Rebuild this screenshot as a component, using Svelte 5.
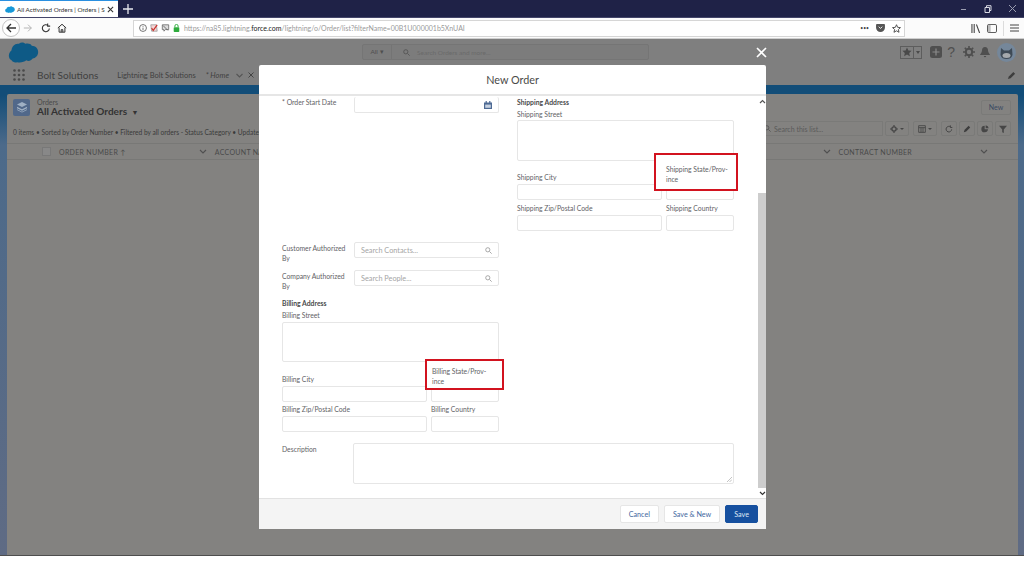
<div class="browser">
    <div class="tabstrip">
        <div class="tab">
            <svg width="10" height="7" viewBox="0 0 22 16"><path d="M6 15c-3 0-6-2-6-5 0-2 1-4 3-4 1-3 4-5 7-4 2-2 5-2 7 0 3 0 5 3 5 6s-3 6-6 6c-2 2-5 2-7 1-1 1-2 1-3 0z" fill="#1798d8" /></svg>
            <span class="tab-title">All Activated Orders | Orders | S</span>
            <svg class="tab-x" width="7" height="7" viewBox="0 0 8 8"><path d="M1 1l6 6M7 1L1 7" stroke="#333" stroke-width="1.2" /></svg>
        </div>
        <svg class="tab-plus" width="10" height="10" viewBox="0 0 10 10"><path d="M5 0v10M0 5h10" stroke="#e8e9ee" stroke-width="1.3" /></svg>
        <div class="win-btns">
            <svg width="8" height="8" viewBox="0 0 8 8"><path d="M1 4.500h5" stroke="#9a9db0" /></svg>
            <svg width="8" height="8" viewBox="0 0 8 8"><path d="M1 2.500h4.500v5H1zM2.500 2.500V.7H7v4.800H5.500" fill="none" stroke="#d8d9e2" /></svg>
            <svg width="9" height="9" viewBox="0 0 9 9"><path d="M1 1l7 7M8 1L1 8" stroke="#9a9db0" /></svg>
        </div>
    </div>
    <div class="toolbar">
        <div class="back">
            <svg width="12" height="12" viewBox="0 0 12 12"><path d="M11 6H2M6 2L2 6l4 4" fill="none" stroke="#333" stroke-width="1.3" /></svg>
        </div>
        <svg class="tb-forward" width="10" height="10" viewBox="0 0 12 12"><path d="M1 6h9M6 2l4 4-4 4" fill="none" stroke="#b5b5b5" stroke-width="1.2" /></svg>
        <svg class="tb-reload" width="10" height="10" viewBox="0 0 12 12"><path d="M10 6.500A4.200 4.200 0 1 1 8.500 3M8 .5v3.200h3" fill="none" stroke="#333" stroke-width="1.3" /></svg>
        <svg class="tb-home" width="10" height="10" viewBox="0 0 12 12"><path d="M1 6l5-4.500L11 6M2.500 5.500V11h7V5.500M5 11V8h2v3" fill="none" stroke="#333" stroke-width="1.2" /></svg>
        <div class="urlbar">
            <svg width="8" height="8" viewBox="0 0 10 10"><circle cx="5" cy="5" r="4.300" fill="none" stroke="#555" /><path d="M5 4.500V7.500M5 2.500v1" stroke="#555" /></svg>
            <svg width="8" height="8" viewBox="0 0 10 10"><path d="M1 1h7l1 8H2z" fill="#f5d5d5" stroke="#999" /><path d="M2 5l2 3 5-7" fill="none" stroke="#c9302c" stroke-width="1.4" /></svg>
            <svg width="9" height="8" viewBox="0 0 10 10"><path d="M1 1h8v6H5L3 9V7H1z" fill="#ddd" stroke="#666" /><path d="M2 2l6 6" stroke="#555" /></svg>
            <svg width="7" height="8" viewBox="0 0 8 10"><rect x=".5" y="4" width="7" height="6" rx="1" fill="#2eab3c" /><path d="M2 4V2.500a2 2 0 0 1 4 0V4" fill="none" stroke="#2eab3c" stroke-width="1.2" /></svg>
            <span class="url">https://na85.lightning.<b>force.com</b>/lightning/o/Order/list?filterName=00B1U000001b5XnUAI</span>
            <span class="url-end">
                <span class="dots">•••</span>
                <svg width="9" height="8" viewBox="0 0 10 9"><path d="M1 0h8a1 1 0 0 1 1 1v3a5 5 0 0 1-10 0V1a1 1 0 0 1 1-1z" fill="#555" /><path d="M3 3l2 2 2-2" fill="none" stroke="#fff" /></svg>
                <svg width="9" height="9" viewBox="0 0 10 10"><path d="M5 .8l1.300 2.900 3.100.3-2.300 2.100.7 3.100L5 7.600 2.200 9.200l.7-3.100L.6 4l3.100-.3z" fill="none" stroke="#444" /></svg>
            </span>
        </div>
        <div class="tb-right">
            <svg width="10" height="9" viewBox="0 0 11 10"><path d="M1 0v10M3.500 0v10M6 .5l3.500 9.500" fill="none" stroke="#444" stroke-width="1.200" /></svg>
            <svg width="10" height="9" viewBox="0 0 11 10"><rect x=".5" y=".5" width="10" height="9" rx="1.500" fill="none" stroke="#444" /><path d="M1 1h3v8H1z" fill="#bbb" /></svg>
            <span class="tb-sep"></span>
            <svg width="9" height="8" viewBox="0 0 9 8"><path d="M0 1h9M0 4h9M0 7h9" stroke="#444" /></svg>
        </div>
    </div>
</div>

<div class="page">
    <header class="global">
        <svg class="cloud" width="31" height="22" viewBox="0 0 32 24"><path d="M9 22c-2 1-5 0-6-2-2-1-3-3-3-5 0-3 2-5 3-6 0-4 4-8 8-7 2-2 5-2 7 0 3-1 6 0 7 2 4 0 7 3 7 7s-3 7-6 7c-2 3-5 3-7 2-2 2-7 3-10 2z" fill="#0e5a86" /></svg>
        <div class="search">
            <span class="search-all">All ▾</span>
            <span class="search-text">
                <svg width="7" height="7" viewBox="0 0 10 10"><circle cx="4" cy="4" r="3" fill="none" stroke="#555" stroke-width="1.300" /><path d="M6.500 6.500L9.500 9.500" stroke="#555" stroke-width="1.300" /></svg>
                Search Orders and more...
            </span>
        </div>
        <div class="global-actions">
            <span class="fav">
                <svg width="10" height="10" viewBox="0 0 10 10"><path d="M5 .5l1.400 3 3.200.3-2.400 2.200.7 3.300L5 7.600 2.100 9.300l.7-3.300L.4 3.800l3.200-.3z" fill="#4a4a4a" /></svg>
                <i></i>
                <span class="fav-caret"></span>
            </span>
            <svg class="plus" width="12" height="12" viewBox="0 0 12 12"><rect width="12" height="12" rx="2.500" fill="#4f4f4f" /><path d="M6 2.500v7M2.500 6h7" stroke="#8a8a8a" stroke-width="1.200" /></svg>
            <span class="help">?</span>
            <svg class="gear" width="12" height="12" viewBox="0 0 12 12"><circle cx="6" cy="6" r="3.200" fill="none" stroke="#4f4f4f" stroke-width="2" /><path d="M6 0v2.500M6 9.500V12M0 6h2.500M9.500 6H12M1.800 1.800l1.800 1.800M8.400 8.400l1.800 1.800M10.200 1.800L8.400 3.600M3.600 8.400l-1.800 1.800" stroke="#4f4f4f" stroke-width="1.600" /></svg>
            <svg width="10" height="11" viewBox="0 0 10 11"><path d="M5 0c2 0 3 1.500 3 3.500 0 2.500 2 3.500 2 4.500H0c0-1 2-2 2-4.500C2 1.500 3 0 5 0zM3.800 9h2.400a1.200 1.200 0 0 1-2.400 0z" fill="#4f4f4f" /></svg>
            <svg class="avatar" width="19" height="19" viewBox="0 0 19 19"><circle cx="9.500" cy="9.500" r="9.500" fill="#75879a" /><path d="M4 5l3 2.500h5L15 5l.5 7c-1 3-3 4-6 4s-5-1-6-4z" fill="#3e4a56" /><ellipse cx="9.500" cy="12.500" rx="4" ry="2.500" fill="#a5a9ad" /></svg>
        </div>
    </header>
    <nav class="appnav">
        <svg class="waffle" width="12" height="12" viewBox="0 0 12 12" fill="#4a4a4a">
            {#each [1.5, 6, 10.5] as cy}
                {#each [1.5, 6, 10.5] as cx}
                    <circle {cx} {cy} r="1.300" />
                {/each}
            {/each}
        </svg>
        <span class="app-name">Bolt Solutions</span>
        <span class="nav-item">Lightning Bolt Solutions</span>
        <span class="nav-home">* Home</span>
        <svg class="nav-chev" width="7" height="5" viewBox="0 0 7 5"><path d="M.5 1l3 3 3-3" fill="none" stroke="#555" stroke-width="1.100" /></svg>
        <svg class="nav-x" width="6" height="6" viewBox="0 0 6 6"><path d="M.5.5l5 5M5.500.5l-5 5" stroke="#444" stroke-width="1" /></svg>
        <svg class="nav-edit" width="9" height="9" viewBox="0 0 10 10"><path d="M1 9l1-3 5-5 2 2-5 5z" fill="#3d3d3d" /></svg>
    </nav>
    <div class="band">
        <section class="card">
            <div class="card-head">
                <span class="obj-icon">
                    <svg width="12" height="12" viewBox="0 0 12 12" fill="#9fb0c4"><path d="M6 1l5 2.500L6 6 1 3.500z" /><path d="M1 5.800L6 8.300l5-2.500v1.400L6 9.700 1 7.200z" /><path d="M1 8.300l5 2.500 5-2.500v.8L6 11.600 1 9.100z" /></svg>
                </span>
                <div class="titles">
                    <span class="eyebrow">Orders</span>
                    <span class="list-name">All Activated Orders <small>▼</small></span>
                </div>
                <span class="new-btn">New</span>
            </div>
            <div class="card-meta">
                <span class="meta-text">0 items • Sorted by Order Number • Filtered by all orders - Status Category • Updated</span>
                <div class="list-tools">
                    <span class="list-search">
                        <svg width="7" height="7" viewBox="0 0 10 10"><circle cx="4" cy="4" r="3" fill="none" stroke="#555" stroke-width="1.300" /><path d="M6.500 6.500L9.500 9.500" stroke="#555" stroke-width="1.300" /></svg>
                        Search this list...
                    </span>
                    <span class="tool wide"><svg width="8" height="8" viewBox="0 0 12 12"><circle cx="6" cy="6" r="3.200" fill="none" stroke="#464646" stroke-width="2" /><path d="M6 0v2.500M6 9.500V12M0 6h2.500M9.500 6H12" stroke="#464646" stroke-width="1.800" /></svg><em></em></span>
                    <span class="tool wide"><svg width="8" height="8" viewBox="0 0 12 12"><path d="M1 1h10v10H1zM1 4h10M4.500 4v7M7.500 4v7" fill="none" stroke="#464646" stroke-width="1.300" /></svg><em></em></span>
                    <span class="tool"><svg width="8" height="8" viewBox="0 0 12 12"><path d="M10 6.500A4.200 4.200 0 1 1 8.500 3M8 .5v3.200h3" fill="none" stroke="#464646" stroke-width="1.500" /></svg></span>
                    <span class="tool"><svg width="8" height="8" viewBox="0 0 10 10"><path d="M1 9l1-3 5-5 2 2-5 5z" fill="#3d3d3d" /></svg></span>
                    <span class="tool"><svg width="8" height="8" viewBox="0 0 12 12"><path d="M5.500 1a5 5 0 1 0 5 5.500h-5z" fill="#464646" /><path d="M7 0.500a5 5 0 0 1 4.500 4.500H7z" fill="#464646" /></svg></span>
                    <span class="tool"><svg width="8" height="8" viewBox="0 0 10 10"><path d="M0 1h10L6 5.500V10L4 9V5.500z" fill="#464646" /></svg></span>
                </div>
            </div>
            <div class="thead">
                <span class="check"></span>
                <span class="th th-num">ORDER NUMBER ↑</span>
                <svg class="chev" width="8" height="5" viewBox="0 0 8 5"><path d="M1 1l3 3 3-3" fill="none" stroke="#4f4f4f" stroke-width="1.100" /></svg>
                <span class="th th-acct">ACCOUNT NAME</span>
                <svg class="chev chev-contract" width="8" height="5" viewBox="0 0 8 5"><path d="M1 1l3 3 3-3" fill="none" stroke="#4f4f4f" stroke-width="1.100" /></svg>
                <span class="th th-contract">CONTRACT NUMBER</span>
                <svg class="chev chev-last" width="8" height="5" viewBox="0 0 8 5"><path d="M1 1l3 3 3-3" fill="none" stroke="#4f4f4f" stroke-width="1.100" /></svg>
            </div>
        </section>
    </div>
</div>

<svg class="modal-x" width="11" height="11" viewBox="0 0 11 11"><path d="M1 1l9 9M10 1l-9 9" stroke="#fff" stroke-width="1.600" /></svg>

<div class="modal">
    <div class="modal-head">New Order</div>
    <div class="modal-body">
        <div class="form">
            <div class="columns">
                <div class="col col-left">
                    <div class="row row-date">
                        <span class="side-label req"><i>*</i> Order Start Date</span>
                        <span class="input side-input cal">
                            <svg width="8" height="8" viewBox="0 0 10 10"><path d="M0 2h10v8H0zM2 0h1.500v2H2zM6.500 0H8v2H6.500z" fill="#4e6a94" /><path d="M1.500 4.500h7v4h-7z" fill="#c6d1e0" /></svg>
                        </span>
                    </div>
                    <div class="row row-contact">
                        <span class="side-label">Customer Authorized By</span>
                        <span class="input side-input lookup">Search Contacts...
                            <svg width="7" height="7" viewBox="0 0 10 10"><circle cx="4" cy="4" r="3" fill="none" stroke="#999" stroke-width="1.200" /><path d="M6.500 6.500L9.500 9.500" stroke="#999" stroke-width="1.200" /></svg>
                        </span>
                    </div>
                    <div class="row row-people">
                        <span class="side-label">Company Authorized By</span>
                        <span class="input side-input lookup">Search People...
                            <svg width="7" height="7" viewBox="0 0 10 10"><circle cx="4" cy="4" r="3" fill="none" stroke="#999" stroke-width="1.200" /><path d="M6.500 6.500L9.500 9.500" stroke="#999" stroke-width="1.200" /></svg>
                        </span>
                    </div>
                    <div class="address billing">
                        <div class="addr-title">Billing Address</div>
                        <div class="lbl street-lbl">Billing Street</div>
                        <span class="input area"></span>
                        <div class="pair city-row">
                            <div class="wide-cell"><div class="lbl">Billing City</div><span class="input"></span></div>
                            <div class="narrow-cell"><span class="input"></span></div>
                        </div>
                        <div class="pair zip-row">
                            <div class="wide-cell"><div class="lbl">Billing Zip/Postal Code</div><span class="input"></span></div>
                            <div class="narrow-cell"><div class="lbl">Billing Country</div><span class="input"></span></div>
                        </div>
                    </div>
                </div>
                <div class="col col-right">
                    <div class="address shipping">
                        <div class="addr-title">Shipping Address</div>
                        <div class="lbl street-lbl">Shipping Street</div>
                        <span class="input area"><svg class="grip" width="5" height="5" viewBox="0 0 5 5"><path d="M0 5l5-5M2.500 5L5 2.500" stroke="#aaa" stroke-width=".7" /></svg></span>
                        <div class="pair city-row">
                            <div class="wide-cell"><div class="lbl">Shipping City</div><span class="input"></span></div>
                            <div class="narrow-cell"><span class="input"></span></div>
                        </div>
                        <div class="pair zip-row">
                            <div class="wide-cell"><div class="lbl">Shipping Zip/Postal Code</div><span class="input"></span></div>
                            <div class="narrow-cell"><div class="lbl">Shipping Country</div><span class="input"></span></div>
                        </div>
                    </div>
                </div>
            </div>
            <div class="desc-row">
                <span class="desc-label">Description</span>
                <span class="input desc"><svg class="grip" width="5" height="5" viewBox="0 0 5 5"><path d="M0 5l5-5M2.500 5L5 2.500" stroke="#aaa" stroke-width=".7" /></svg></span>
            </div>
        </div>
        <div class="scrollbar">
            <svg class="arrow" width="7" height="5" viewBox="0 0 7 5"><path d="M1 4l2.500-2.500L6 4" fill="none" stroke="#555" stroke-width="1.200" /></svg>
            <div class="track"><div class="thumb"></div></div>
            <svg class="arrow" width="7" height="5" viewBox="0 0 7 5"><path d="M1 1l2.500 2.500L6 1" fill="none" stroke="#333" stroke-width="1.200" /></svg>
        </div>
        <div class="callout callout-ship">Shipping State/Prov-<br />ince</div>
        <div class="callout callout-bill">Billing State/Prov-<br />ince</div>
    </div>
    <div class="modal-foot">
        <button class="btn">Cancel</button>
        <button class="btn">Save &amp; New</button>
        <button class="btn primary">Save</button>
    </div>
</div>

<style>
    :global(body) {
        background: #fff;
        overflow: hidden;
    }
    :global(#app) {
        font-family: Lato, "Open Sans", sans-serif;
        width: 1024px;
        height: 576px;
        position: relative;
        overflow: hidden;
    }
    .tabstrip {
        height: 18px;
        box-sizing: border-box;
        background: #1f2247;
        display: flex;
        align-items: stretch;
        border-bottom: 1px solid #44466a;
    }
    .tab {
        width: 118px;
        box-sizing: border-box;
        background: #fff;
        border-top: 1px solid #2a8fe0;
        display: flex;
        align-items: center;
        gap: 2px;
        padding: 0 4px 0 5px;
    }
    .tab-title {
        font-size: 6.300px;
        color: #333;
        white-space: nowrap;
        flex: 1;
    }
    .tab-plus {
        margin: 4px 0 0 5px;
    }
    .win-btns {
        margin-left: auto;
        display: flex;
        align-items: center;
        gap: 16px;
        padding-right: 7px;
    }
    .toolbar {
        height: 21px;
        box-sizing: border-box;
        background: #fbfbfb;
        display: flex;
        align-items: center;
        border-bottom: 1px solid #cfcfcf;
    }
    .back {
        width: 18px;
        height: 18px;
        margin-left: 2px;
        box-sizing: border-box;
        border: 1px solid #c4c4c4;
        border-radius: 50%;
        background: #fff;
        display: flex;
        align-items: center;
        justify-content: center;
    }
    .tb-forward { margin-left: 3px; }
    .tb-reload { margin-left: 8px; }
    .tb-home { margin-left: 6px; }
    .urlbar {
        width: 772px;
        margin-left: 66px;
        height: 17px;
        box-sizing: border-box;
        border: 1px solid #d6d6d6;
        background: #fff;
        display: flex;
        align-items: center;
        gap: 3px;
        padding: 0 3px 0 5px;
        font-size: 7px;
    }
    .url {
        margin-left: 1px;
        color: #9a9a9a;
        white-space: nowrap;
    }
    .url b {
        font-weight: 400;
        color: #222;
    }
    .url-end {
        margin-left: auto;
        display: flex;
        align-items: center;
        gap: 7px;
    }
    .dots {
        font-size: 5px;
        color: #444;
    }
    .tb-right {
        display: flex;
        align-items: center;
        gap: 6px;
        margin-left: auto;
        padding-right: 5px;
    }
    .tb-sep {
        width: 1px;
        height: 15px;
        background: #dcdcdc;
    }

    .page {
        height: 517px;
        box-sizing: border-box;
        background: #7f7f7f;
        border-bottom: 1px solid #4e4e4e;
        display: flex;
        flex-direction: column;
    }
    .global {
        height: 26px;
        flex: none;
        position: relative;
        display: flex;
        align-items: center;
    }
    .cloud { margin: 2px 0 0 8px; }
    .search {
        position: absolute;
        left: 362px;
        top: 5px;
        width: 287px;
        height: 16px;
        background: #7c7c7c;
        border: 1px solid #757575;
        box-sizing: border-box;
        border-radius: 2px;
        display: flex;
        align-items: center;
        font-size: 6.500px;
        color: #4f4f4f;
    }
    .search-all {
        width: 28px;
        text-align: center;
        border-right: 1px solid #747474;
        line-height: 14px;
    }
    .search-text {
        display: flex;
        align-items: center;
        gap: 7px;
        margin-left: 11px;
        color: #6a6a6a;
    }
    .global-actions {
        margin-left: auto;
        display: flex;
        align-items: center;
        gap: 5px;
        padding-right: 8px;
    }
    .fav {
        width: 22px;
        height: 13px;
        border: 1px solid #5d5d5d;
        box-sizing: border-box;
        display: flex;
        align-items: center;
        padding-left: 1px;
        position: relative;
    }
    .fav i {
        width: 1px;
        height: 11px;
        background: #5d5d5d;
        margin-left: 1px;
    }
    .fav-caret {
        margin-left: 2px;
        border: 2.500px solid transparent;
        border-top: 3px solid #4a4a4a;
        border-bottom: 0;
    }
    .plus { margin-left: 3px; }
    .gear { margin-left: 3px; }
    .help {
        font-size: 14px;
        color: #505050;
        font-family: "Liberation Sans", sans-serif;
    }
    .avatar { margin-left: 2px; }
    .appnav {
        height: 20px;
        flex: none;
        display: flex;
        align-items: center;
        color: #3f3f3f;
    }
    .waffle { margin-left: 13px; }
    .app-name {
        font-size: 10px;
        margin-left: 12px;
    }
    .nav-item {
        font-size: 7.500px;
        margin-left: 19px;
    }
    .nav-home {
        font-size: 7.500px;
        font-style: italic;
        margin-left: 10px;
    }
    .nav-chev { margin-left: 7px; }
    .nav-x { margin-left: 5px; }
    .nav-edit {
        margin-left: auto;
        margin-right: 8px;
    }
    .band {
        flex: 1;
        background: linear-gradient(#124d78 0, #124d78 10px, #4c6a8a 60px, #5f6b84 100%);
        padding: 9px 6px 0 7px;
        min-height: 0;
    }
    .card {
        height: 100%;
        background: #838280;
        border-radius: 2px 2px 0 0;
        box-sizing: border-box;
    }
    .card-head {
        height: 26px;
        display: flex;
        align-items: center;
        padding: 0 7px 0 6px;
    }
    .obj-icon {
        width: 17px;
        height: 17px;
        background: #51688a;
        border-radius: 2px;
        display: flex;
        align-items: center;
        justify-content: center;
    }
    .titles {
        display: flex;
        flex-direction: column;
        margin-left: 7px;
        line-height: 1;
    }
    .eyebrow {
        font-size: 7px;
        color: #4a4a4a;
    }
    .list-name {
        font-size: 10px;
        font-weight: 700;
        color: #333;
    }
    .list-name small {
        font-size: 7px;
        margin-left: 2px;
    }
    .new-btn {
        margin-left: auto;
        width: 30px;
        height: 15px;
        border: 1px solid #7a7a78;
        box-sizing: border-box;
        border-radius: 2px;
        font-size: 7px;
        color: #3a4a63;
        text-align: center;
        line-height: 13px;
    }
    .card-meta {
        height: 24px;
        display: flex;
        align-items: flex-start;
        padding: 0 7px 0 6px;
        font-size: 6.600px;
        color: #3a3a3a;
        border-bottom: 1px solid #787876;
        box-sizing: border-box;
    }
    .meta-text {
        margin-top: 8px;
        white-space: nowrap;
    }
    .list-tools {
        margin-left: auto;
        display: flex;
        align-items: center;
        gap: 2px;
        margin-top: 1px;
    }
    .list-search {
        width: 125px;
        height: 15px;
        display: flex;
        align-items: center;
        gap: 3px;
        font-size: 7px;
        color: #5a5a5a;
        padding-left: 5px;
        border: 1px solid #7a7a78;
        box-sizing: border-box;
    }
    .tool {
        height: 15px;
        width: 16px;
        border: 1px solid #7a7a78;
        box-sizing: border-box;
        border-radius: 2px;
        display: flex;
        align-items: center;
        justify-content: center;
        gap: 2px;
    }
    .tool.wide {
        width: 24px;
        margin-right: 2px;
    }
    .tool em {
        border: 2px solid transparent;
        border-top: 2.500px solid #464646;
        border-bottom: 0;
    }
    .thead {
        height: 16px;
        display: flex;
        align-items: center;
        font-size: 7px;
        letter-spacing: .3px;
        color: #4a4a4a;
        border-bottom: 1px solid #787876;
        box-sizing: border-box;
    }
    .check {
        width: 9px;
        height: 9px;
        background: #888;
        border: 1px solid #787878;
        box-sizing: border-box;
        margin-left: 35px;
    }
    .th { white-space: nowrap; }
    .th-num { margin-left: 8px; }
    .chev { margin-left: 73px; }
    .th-acct { margin-left: 8px; }
    .chev-contract { margin-left: 548px; }
    .th-contract { margin-left: 8px; }
    .chev-last { margin-left: 68px; }

    .modal-x {
        position: absolute;
        left: 756px;
        top: 47px;
    }
    .modal {
        position: absolute;
        left: 259px;
        top: 65px;
        width: 507px;
        height: 464px;
        background: #fff;
        border-radius: 2px;
        display: flex;
        flex-direction: column;
    }
    .modal-head {
        height: 31px;
        flex: none;
        box-sizing: border-box;
        border-bottom: 2px solid #e6e6e6;
        text-align: center;
        font-size: 10.800px;
        line-height: 30px;
        color: #4a4a48;
    }
    .modal-body {
        flex: 1;
        position: relative;
        overflow: hidden;
        display: flex;
    }
    .form {
        flex: 1;
        padding: 1px 24px 0 23px;
        color: #5f6266;
        font-size: 6.800px;
    }
    .columns {
        display: flex;
        gap: 18px;
    }
    .col {
        width: 217px;
        flex: none;
    }
    .row {
        display: flex;
    }
    .side-label {
        width: 72px;
        flex: none;
        line-height: 10px;
        padding-right: 4px;
        box-sizing: border-box;
        margin-top: 1px;
    }
    .req {
        margin-top: 0;
    }
    .req i {
        color: #6a5a5a;
        font-style: normal;
    }
    .input {
        display: block;
        height: 16px;
        box-sizing: border-box;
        border: 1px solid #e6e6e6;
        border-radius: 2px;
        background: #fff;
        position: relative;
    }
    .side-input {
        flex: 1;
        display: flex;
        align-items: center;
        justify-content: space-between;
        padding: 0 6px;
        color: #a5a5a5;
    }
    .lookup {
        font-size: 7.300px;
    }
    .cal {
        border-top: 0;
        justify-content: flex-end;
    }
    .row-contact {
        margin-top: 129px;
    }
    .row-people {
        margin-top: 7px;
    }
    .address {
        line-height: 9px;
    }
    .billing {
        margin-top: 8px;
    }
    .shipping {
        margin-top: 1px;
    }
    .addr-title {
        font-weight: 700;
        color: #4a4a4a;
    }
    .street-lbl {
        margin-top: 3px;
    }
    .lbl {
        margin-bottom: 2px;
    }
    .area {
        height: 41px;
    }
    .street-lbl {
        margin-bottom: 1px;
    }
    .billing .area {
        height: 40px;
        margin-top: 2px;
    }
    .pair {
        display: flex;
        gap: 4px;
        align-items: flex-end;
    }
    .city-row {
        margin-top: 12px;
    }
    .zip-row {
        margin-top: 4px;
    }
    .billing .city-row {
        margin-top: 13px;
    }
    .billing .zip-row {
        margin-top: 3px;
    }
    .wide-cell {
        width: 145px;
        flex: none;
    }
    .narrow-cell {
        flex: 1;
    }
    .desc-row {
        display: flex;
        margin-top: 11px;
    }
    .desc-label {
        width: 71px;
        flex: none;
        padding-top: 2px;
    }
    .desc {
        flex: 1;
        height: 41px;
    }
    .grip {
        position: absolute;
        right: 1px;
        bottom: 1px;
    }
    .scrollbar {
        width: 9px;
        flex: none;
        display: flex;
        flex-direction: column;
        align-items: center;
        background: #fff;
        padding: 3px 0 2px;
        box-sizing: border-box;
    }
    .track {
        flex: 1;
        width: 100%;
        display: flex;
        flex-direction: column;
        justify-content: flex-end;
        padding: 3px 0;
        box-sizing: border-box;
    }
    .thumb {
        height: 295px;
        background: #cdcdcd;
    }
    .callout {
        position: absolute;
        background: #fff;
        border: 2px solid #d2131f;
        box-sizing: border-box;
        color: #5f6266;
        font-size: 6.800px;
        line-height: 10px;
    }
    .callout-ship {
        left: 395px;
        top: 57px;
        width: 84px;
        height: 38px;
        padding: 9px 0 0 10px;
    }
    .callout-bill {
        left: 166px;
        top: 263px;
        width: 79px;
        height: 31px;
        padding: 5px 0 0 5px;
    }
    .modal-foot {
        height: 31px;
        flex: none;
        box-sizing: border-box;
        background: #f4f4f4;
        border-top: 1px solid #e2e2e2;
        display: flex;
        justify-content: flex-end;
        align-items: center;
        gap: 5px;
        padding-right: 8px;
    }
    .btn {
        height: 18px;
        padding: 0 8px;
        border: 1px solid #e6e6e6;
        border-radius: 2px;
        background: #fff;
        font: 7.200px Lato, sans-serif;
        color: #3f68a0;
    }
    .btn.primary {
        background: #16509f;
        border-color: #16509f;
        color: #dfe8f5;
    }
</style>
